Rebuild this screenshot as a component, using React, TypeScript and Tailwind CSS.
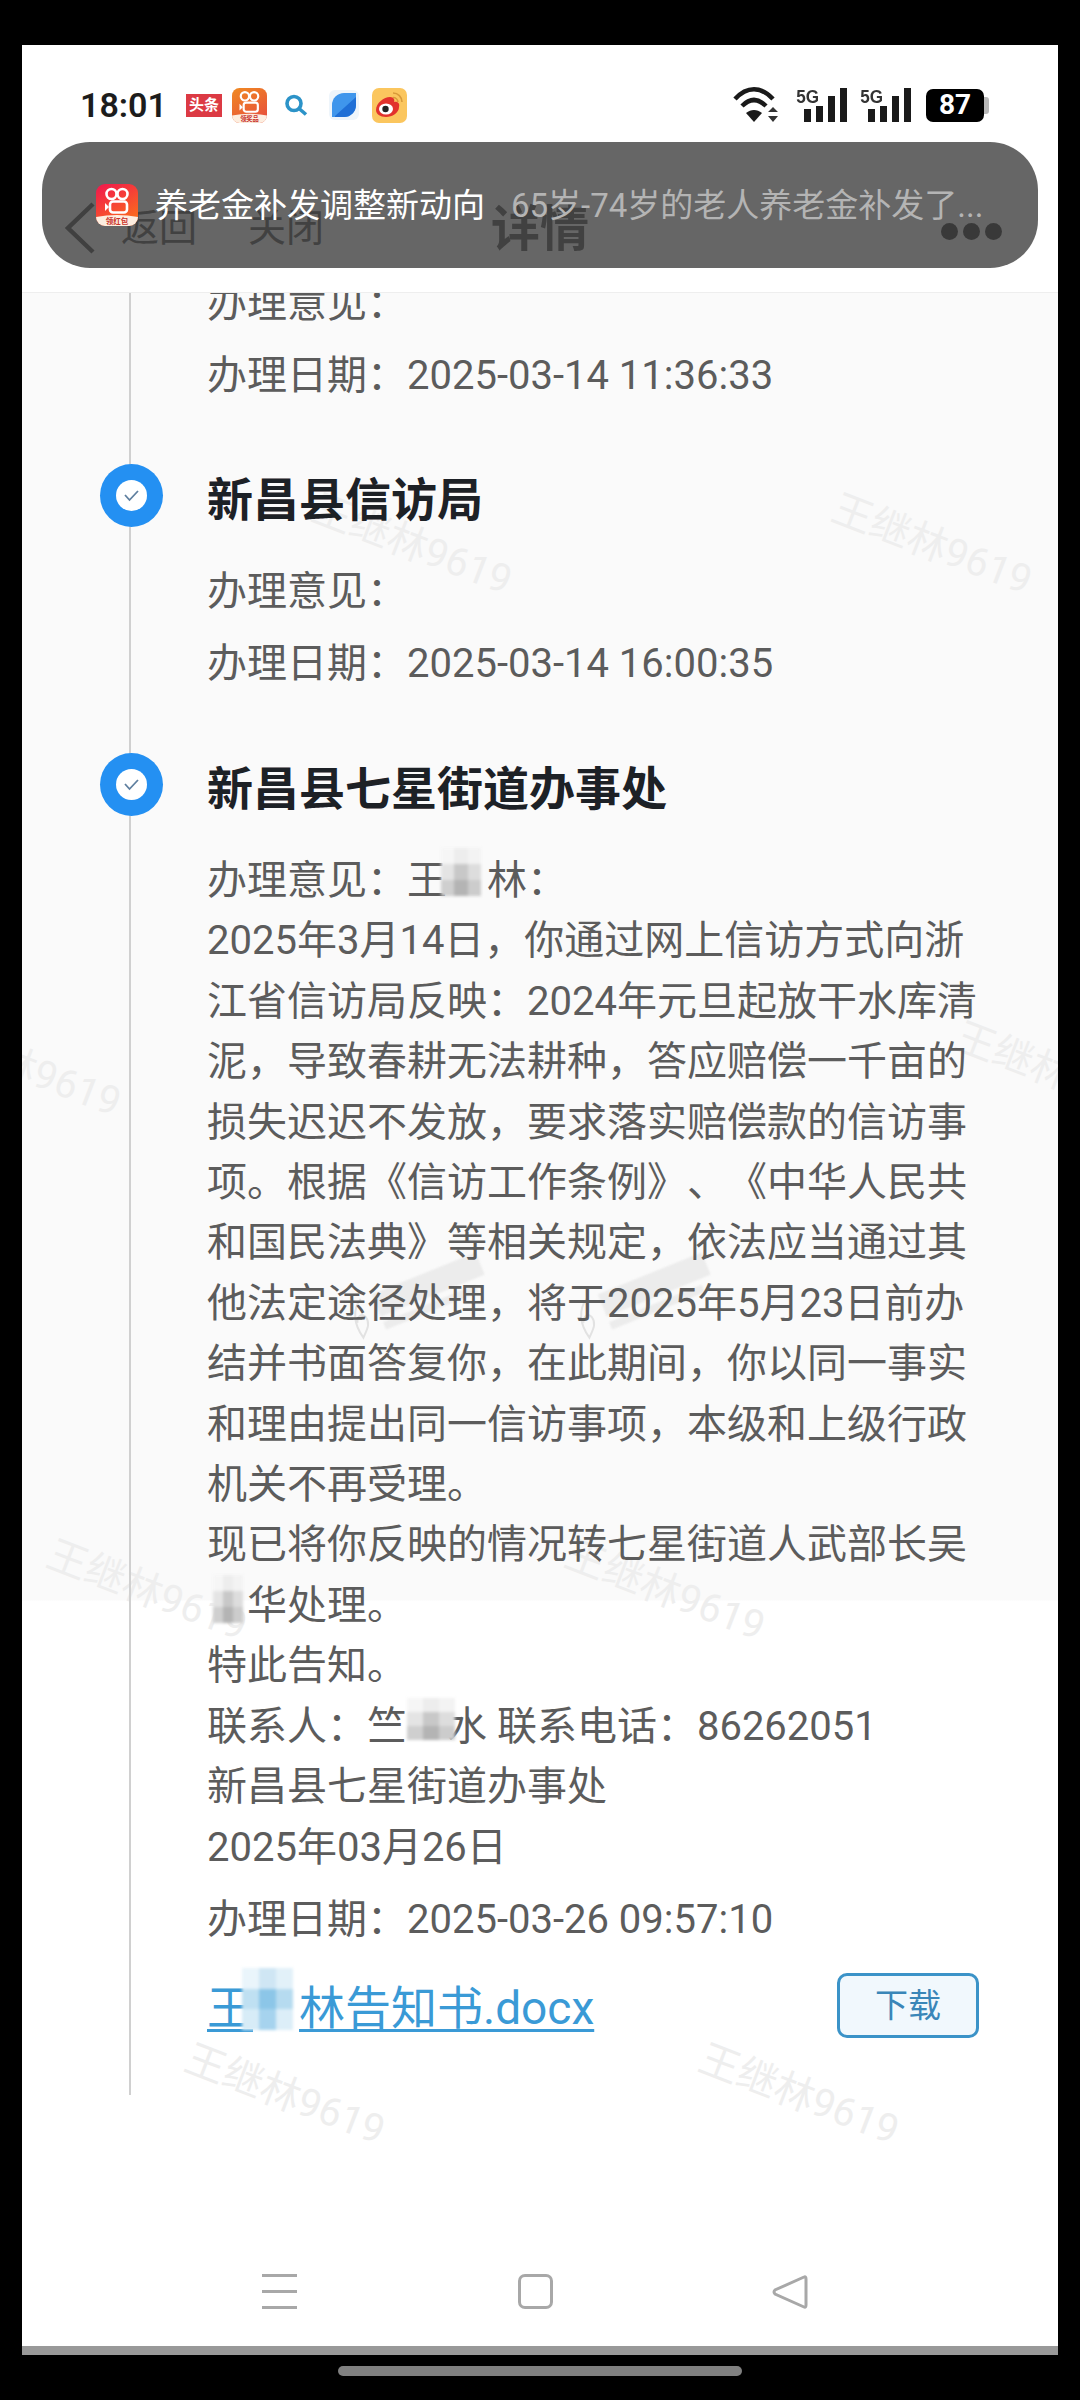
const Mosaic = ({ box, cells, width }: { box: string; cells: string[]; width: string }) => {
    return (
        <span className={`relative inline-block h-[1em] align-baseline ${width}`}>
            <span className={`absolute grid grid-cols-3 blur-[1.5px] ${box}`}>
                {cells.map((cell, i) => (
                    <span key={i} className={`block ${cell}`} />
                ))}
            </span>
        </span>
    )
}

const greyCells = [
    "bg-[#f6f6f6]", "bg-[#ededed]", "bg-[#f3f3f3]",
    "bg-[#e4e4e4]", "bg-[#c8c8c8]", "bg-[#dddddd]",
    "bg-[#cfcfcf]", "bg-[#b4b4b4]", "bg-[#cccccc]",
]
const blueCells = [
    "bg-[#eaf5fb]", "bg-[#cfe6f4]", "bg-[#e2f1f9]",
    "bg-[#bfe0f2]", "bg-[#8cc6e8]", "bg-[#b6dbf0]",
    "bg-[#d7ecf7]", "bg-[#a6d3ee]", "bg-[#dceef8]",
]

const Dot = () => (
    <span className="absolute -left-[107px] -top-[6px] flex h-[63px] w-[63px] items-center justify-center rounded-full bg-[#2490f2]">
        <svg width="31" height="31" viewBox="0 0 31 31" fill="none">
            <circle cx="15.5" cy="15.5" r="15.5" fill="#ffffff" />
            <path d="M9 15L13.5 20L22 11" stroke="#5f7f9f" strokeWidth="1.8" />
        </svg>
    </span>
)

const Watermark = ({ className }: { className: string }) => (
    <span className={`absolute rotate-[21deg] whitespace-nowrap text-[40px] leading-none text-[#eeeeee] ${className}`}>
        王继林9619
    </span>
)

// faint site stamp behind the body text, its wording can't be read in the shot
const SiteStamp = ({ className }: { className: string }) => (
    <span className={`absolute flex -rotate-[22deg] items-center gap-[6px] ${className}`}>
        <svg width="26" height="44" viewBox="0 0 26 44" fill="none">
            <path d="M20 3C8 10 4 24 8 40C14 34 20 30 18 22C16 16 10 18 8 24" stroke="#e2e2e2" strokeWidth="2" />
        </svg>
        <span className="flex flex-col gap-[6px] blur-[1px]">
            <span className="h-[24px] w-[112px] bg-[#ececec]" />
            <span className="h-[8px] w-[100px] bg-[#ececec]" />
        </span>
    </span>
)

const KuaishouIcon = ({ id, size, label, from, to }: { id: string; size: number; label: string; from: string; to: string }) => (
    <svg width={size} height={size} viewBox="0 0 42 42">
        <defs>
            <linearGradient id={id} x1="0" y1="0" x2="0.6" y2="1">
                <stop offset="0" stopColor={from} />
                <stop offset="1" stopColor={to} />
            </linearGradient>
        </defs>
        <rect width="42" height="42" rx="9" fill={`url(#${id})`} />
        <path d="M0 33Q21 29 42 33V33A9 9 0 0 1 33 42H9A9 9 0 0 1 0 33Z" fill="#fdeee0" />
        <circle cx="15.5" cy="10" r="5" fill="none" stroke="#fff" strokeWidth="2.6" />
        <circle cx="26.5" cy="10" r="5" fill="none" stroke="#fff" strokeWidth="2.6" />
        <rect x="14" y="17.5" width="17" height="11" rx="3" fill="none" stroke="#fff" strokeWidth="2.6" />
        <path d="M13 23L9 19V27Z" fill="#fff" />
        <text x="21" y="40" textAnchor="middle" fontSize="7.5" fontWeight="700" fill="#c8322a">{label}</text>
    </svg>
)

const SignalGroup = () => (
    <div className="relative flex h-[34px] w-[45px] items-end justify-end gap-[5px]">
        <span className="absolute -left-[7px] -top-[1px] text-[19px] font-bold leading-none text-[#333333] font-['Liberation_Sans'] scale-x-90">5G</span>
        <span className="h-[13px] w-[7px] bg-[#1a1a1a]" />
        <span className="h-[16px] w-[7px] bg-[#1a1a1a]" />
        <span className="h-[26px] w-[7px] bg-[#1a1a1a]" />
        <span className="h-[34px] w-[7px] bg-[#1a1a1a]" />
    </div>
)

const StatusBar = () => (
    <div className="flex h-[115px] items-start justify-between pl-[58px] pr-[69px] pt-[41px]">
        <div className="flex items-center">
            <span className="w-[106px] text-[34px] font-semibold leading-[38px] text-[#1c1c1c]">18:01</span>
            {/* notification icons */}
            <span className="flex h-[23px] w-[36px] items-center justify-center bg-[#dc3a44] text-[15px] font-bold leading-none text-white">头条</span>
            <span className="ml-[10px] flex">
                <KuaishouIcon id="ks-small" size={35} label="领奖品" from="#f08a22" to="#e8533a" />
            </span>
            <svg className="ml-[17px]" width="24" height="22" viewBox="0 0 24 22" fill="none">
                <circle cx="10" cy="9.5" r="7" stroke="#2c93c8" strokeWidth="3.6" />
                <path d="M15 14.5L22 20.5" stroke="#2c93c8" strokeWidth="3.6" />
            </svg>
            <svg className="ml-[21px]" width="30" height="30" viewBox="0 0 30 30">
                <rect width="30" height="30" rx="6" fill="#eef5fb" />
                <path d="M3 27V15A12 12 0 0 1 15 3H27V15A12 12 0 0 1 15 27Z" fill="#3f96ec" />
                <path d="M6 26L27 7V15A12 12 0 0 1 15 27H6Z" fill="#1f6fd6" />
            </svg>
            <svg className="ml-[13px]" width="35" height="35" viewBox="0 0 35 35" fill="none">
                <rect width="35" height="35" rx="7" fill="#fbc65e" />
                <path d="M4 22C4 15 12 9 18 9C22 9 23 12 22 14C26 13 28 16 27 19C27 25 20 29 14 29C8 29 4 26 4 22Z" fill="#e2322c" />
                <ellipse cx="14" cy="21" rx="7" ry="5.5" fill="#fff" />
                <circle cx="13.5" cy="21" r="3.2" fill="#222" />
                <path d="M21 5A9 9 0 0 1 30 14M21 9.5A5 5 0 0 1 26 14" stroke="#d89a3a" strokeWidth="1.6" />
            </svg>
        </div>
        <div className="flex items-center pt-[1px]">
            <svg width="50" height="36" viewBox="0 0 50 36" fill="none">
                <path d="M2 12C14 -1 28 -1 40 12" stroke="#1a1a1a" strokeWidth="4.5" />
                <path d="M9 19C17 11 25 11 33 19" stroke="#1a1a1a" strokeWidth="4.5" />
                <path d="M21 35L13 26C18 22 24 22 29 26Z" fill="#1a1a1a" />
                <path d="M40 20L45 25H35ZM40 35L45 29H35Z" fill="#333333" />
            </svg>
            <div className="ml-[19px]"><SignalGroup /></div>
            <div className="ml-[19px]"><SignalGroup /></div>
            <div className="ml-[15px] flex items-center">
                <span className="flex h-[33px] w-[58px] items-center justify-center rounded-[7px] bg-black text-[28px] font-bold leading-none text-white">87</span>
                <span className="h-[17px] w-[5px] rounded-r-[3px] bg-[#b8b8b8]" />
            </div>
        </div>
    </div>
)

const Toast = () => (
    <div className="absolute left-[20px] right-[20px] top-[97px] flex h-[126px] items-center rounded-[48px] bg-black/60 pl-[54px] text-[33px] leading-none">
        <KuaishouIcon id="ks-toast" size={42} label="领红包" from="#f0164f" to="#fb6a1e" />
        <span className="ml-[17px] text-white">养老金补发调整新动向</span>
        <span className="ml-[26px] text-[#b4b4b4]">65岁-74岁的老人养老金补发了...</span>
    </div>
)

const Header = () => (
    <div className="flex h-[133px] items-start border-b border-[#eeeeee] px-[56px] pt-[42px] text-[#a4a4a4]">
        <div className="-ml-[14px] flex flex-1 items-center">
            <svg width="32" height="52" viewBox="0 0 32 52" fill="none">
                <path d="M29 2L4 26L29 50" stroke="#a0a0a0" strokeWidth="4.5" />
            </svg>
            <span className="ml-[25px] text-[38px] leading-none">返回</span>
            <span className="ml-[51px] text-[38px] leading-none">关闭</span>
        </div>
        <span className="ml-[14px] text-[49px] font-bold leading-[56px]">详情</span>
        <div className="flex flex-1 justify-end gap-[5px] pt-[21px]">
            <span className="h-[17px] w-[17px] rounded-full bg-[#909090]" />
            <span className="h-[17px] w-[17px] rounded-full bg-[#909090]" />
            <span className="h-[17px] w-[17px] rounded-full bg-[#909090]" />
        </div>
    </div>
)

const NavBar = () => (
    <div className="flex h-[118px] items-start pt-[46px]">
        <div className="ml-[240px] flex h-[35px] w-[35px] flex-col justify-between">
            <span className="h-[3px] w-[35px] bg-[#a8a8a8]" />
            <span className="h-[3px] w-[35px] bg-[#a8a8a8]" />
            <span className="h-[3px] w-[35px] bg-[#a8a8a8]" />
        </div>
        <span className="ml-[221px] h-[35px] w-[35px] rounded-[7px] border-[3px] border-[#a8a8a8]" />
        <svg className="ml-[219px]" width="36" height="36" viewBox="0 0 36 36" fill="none">
            <path d="M32 3Q34 2 34 5V31Q34 34 32 33L3 20Q1 18 3 16Z" stroke="#a8a8a8" strokeWidth="3" />
        </svg>
    </div>
)

export default function App() {
    return (
        <div className="h-[2400px] w-[1080px] overflow-hidden bg-black pt-[45px] font-['Roboto','Noto_Sans_CJK_SC',sans-serif] [text-spacing-trim:space-all]">
            <div className="relative mx-[22px] flex h-[2301px] flex-col bg-white">
                <StatusBar />
                <Header />

                {/* scrolled page, the grey panel stops at 1601 in the shot */}
                <main className="relative flex-1 overflow-hidden bg-[linear-gradient(#fafafa_1307px,#ffffff_1308px)]">
                    <Watermark className="left-[285px] top-[232px]" />
                    <Watermark className="left-[805px] top-[232px]" />
                    <Watermark className="-left-[106px] top-[754px]" />
                    <Watermark className="left-[928px] top-[760px]" />
                    <Watermark className="left-[20px] top-[1278px]" />
                    <Watermark className="left-[538px] top-[1278px]" />
                    <Watermark className="left-[158px] top-[1782px]" />
                    <Watermark className="left-[672px] top-[1782px]" />
                    <SiteStamp className="left-[322px] top-[982px]" />
                    <SiteStamp className="left-[548px] top-[982px]" />

                    <div className="relative ml-[107px] h-[1821px] border-l-2 border-[#d0d0d0] pl-[76px] text-[40px] leading-[60px] text-[#5c5c5c]">
                        <div className="-mt-[19px]">办理意见：</div>
                        <div className="mt-[12px]">办理日期：2025-03-14 11:36:33</div>

                        <section className="relative mt-[64px]">
                            <Dot />
                            <h2 className="text-[46px] font-bold leading-[60px] text-[#1d2126]">新昌县信访局</h2>
                            <div className="mt-[32px]">办理意见：</div>
                            <div className="mt-[12px]">办理日期：2025-03-14 16:00:35</div>
                        </section>

                        <section className="relative mt-[65px]">
                            <Dot />
                            <h2 className="text-[46px] font-bold leading-[60px] text-[#1d2126]">新昌县七星街道办事处</h2>
                            <div className="mt-[32px] leading-[60.4px]">
                                <div>办理意见：王<Mosaic width="w-[40px]" box="-left-[6px] -top-[6px] h-[48px] w-[40px]" cells={greyCells} />林：</div>
                                <div>2025年3月14日，你通过网上信访方式向浙</div>
                                <div>江省信访局反映：2024年元旦起放干水库清</div>
                                <div>泥，导致春耕无法耕种，答应赔偿一千亩的</div>
                                <div>损失迟迟不发放，要求落实赔偿款的信访事</div>
                                <div>项。根据《信访工作条例》、《中华人民共</div>
                                <div>和国民法典》等相关规定，依法应当通过其</div>
                                <div>他法定途径处理，将于2025年5月23日前办</div>
                                <div>结并书面答复你，在此期间，你以同一事实</div>
                                <div>和理由提出同一信访事项，本级和上级行政</div>
                                <div>机关不再受理。</div>
                                <div>现已将你反映的情况转七星街道人武部长吴</div>
                                <div><Mosaic width="w-[40px]" box="left-[6px] -top-[4px] h-[48px] w-[30px]" cells={greyCells} />华处理。</div>
                                <div>特此告知。</div>
                                <div>联系人：竺<Mosaic width="w-[40px]" box="left-[0px] -top-[2px] h-[42px] w-[48px]" cells={greyCells} />水 联系电话：86262051</div>
                                <div>新昌县七星街道办事处</div>
                                <div>2025年03月26日</div>
                            </div>
                            <div className="mt-[12px]">办理日期：2025-03-26 09:57:10</div>
                            <div className="mt-[23px] flex w-[772px] items-center justify-between">
                                <a className="text-[46px] leading-[60px] text-[#3a9ad6] underline decoration-[3px] underline-offset-[5px]">
                                    王<Mosaic width="w-[46px]" box="-left-[11px] -top-[10px] h-[62px] w-[51px]" cells={blueCells} />林告知书.docx
                                </a>
                                <button type="button" className="mb-[5px] flex h-[65px] w-[142px] items-center justify-center rounded-[10px] border-[3px] border-[#3b93c8] bg-[#f1f8fd] text-[33px] leading-none text-[#3a86b8]">
                                    下载
                                </button>
                            </div>
                        </section>
                    </div>
                </main>

                <NavBar />
                <Toast />
            </div>
            <div className="mx-[22px] h-[9px] bg-[#999999]" />
            <div className="mx-auto mt-[11px] h-[10px] w-[404px] rounded-full bg-[#808080]" />
        </div>
    )
}
